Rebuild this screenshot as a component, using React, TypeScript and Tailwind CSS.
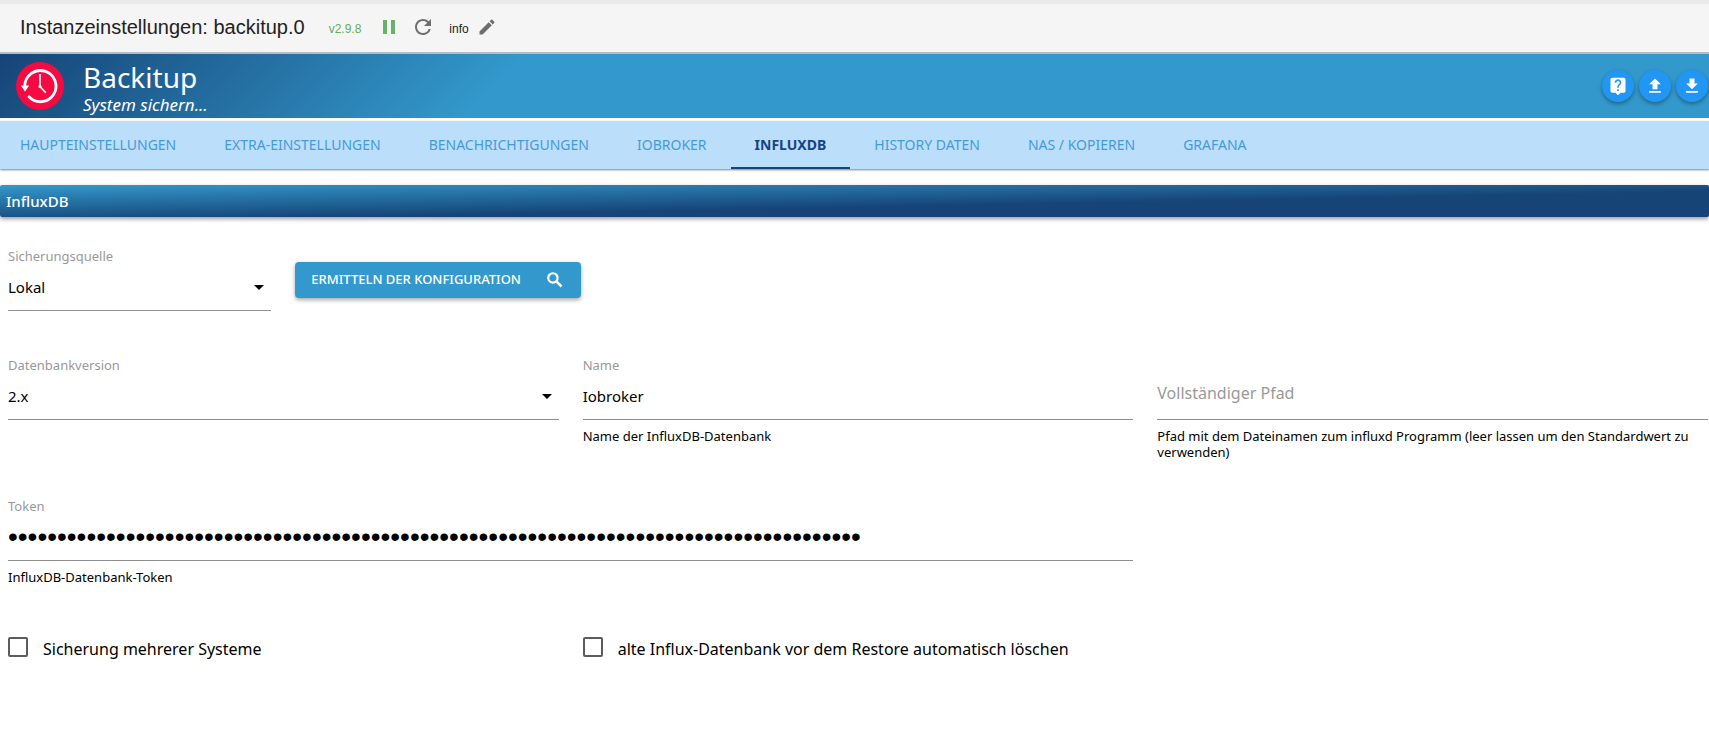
import { useState, type ReactNode } from "react";
import { MdPause, MdRefresh, MdEdit, MdLiveHelp, MdFileUpload, MdFileDownload, MdArrowDropDown } from "react-icons/md";

const tabs = [
  "Haupteinstellungen",
  "Extra-Einstellungen",
  "Benachrichtigungen",
  "ioBroker",
  "InfluxDB",
  "History Daten",
  "NAS / Kopieren",
  "Grafana",
];

function Logo() {
  return (
    <svg viewBox="0 0 48 48" className="size-12 shrink-0" aria-hidden="true">
      <circle cx="24" cy="24" r="24" fill="#f50a41" />
      <path d="M8.8 24A15.6 15.6 0 1 1 13 34.8" fill="none" stroke="#fff" strokeWidth="2.8" strokeLinecap="round" />
      <path d="M4.8 23.4h8.4l-4.2 6.2z" fill="#fff" />
      <path d="M24 12v12.6l5.8 6.2" fill="none" stroke="#fff" strokeWidth="1.6" />
      <circle cx="24" cy="24.4" r="1.5" fill="#fff" />
    </svg>
  );
}

function SearchIcon() {
  return (
    <svg viewBox="0 0 24 24" className="size-5" fill="none" stroke="currentColor" aria-hidden="true">
      <circle cx="9.5" cy="9.5" r="5.6" strokeWidth="2.6" />
      <path d="M14 14l5.8 5.8" strokeWidth="3" />
    </svg>
  );
}

function RoundButton({ label, children }: { label: string; children: ReactNode }) {
  return (
    <button
      type="button"
      aria-label={label}
      className="flex size-8 items-center justify-center rounded-full bg-[#2196f3] text-xl text-white shadow-[0_2px_4px_rgba(0,0,0,0.35)]"
    >
      {children}
    </button>
  );
}

function Field({ id, label, helper, className, children }: { id: string; label: string; helper?: string; className: string; children: ReactNode }) {
  return (
    <div className={className}>
      <label htmlFor={id} className="block text-[13px] leading-[14px] text-[#999999]">
        {label}
      </label>
      <div className="mt-2 flex h-10 items-start border-b border-[#8e8e8e]">{children}</div>
      {helper && <p className="mt-2 text-[13px] leading-4">{helper}</p>}
    </div>
  );
}

function SelectInput({ id, options }: { id: string; options: string[] }) {
  return (
    <div className="grid w-full grid-cols-[1fr_24px] items-center">
      <select id={id} className="col-span-2 col-start-1 row-start-1 h-8 w-full appearance-none bg-transparent text-[15px] outline-none">
        {options.map((o) => (
          <option key={o}>{o}</option>
        ))}
      </select>
      <MdArrowDropDown className="pointer-events-none col-start-2 row-start-1 size-6" />
    </div>
  );
}

function Check({ label, className }: { label: string; className: string }) {
  return (
    <label className={className}>
      <input type="checkbox" className="size-5 shrink-0 appearance-none rounded-xs border-2 border-[#5c5c5c] checked:bg-[#3399cc]" />
      <span className="pt-1">{label}</span>
    </label>
  );
}

export default function App() {
  const [active, setActive] = useState("InfluxDB");
  return (
    <div className="min-h-screen bg-white font-['Noto_Sans',sans-serif] text-black">
      <header className="flex h-[54px] items-center border-t-4 border-b-2 border-t-[#e9e9e9] border-b-[#b4bcc4] bg-[#f5f5f5] pb-0.5 pl-5 font-['Liberation_Sans',sans-serif] text-[#222]">
        <h1 className="text-xl">Instanzeinstellungen: backitup.0</h1>
        <span className="ml-6 pt-1 text-xs text-[#5fae63]">v2.9.8</span>
        <button type="button" aria-label="Pause" className="ml-4 text-[#66b26a]">
          <MdPause className="size-6" />
        </button>
        <button type="button" aria-label="Neu laden" className="ml-2.5 text-[#6e6e6e]">
          <MdRefresh className="size-6" />
        </button>
        <span className="ml-3.5 pt-1 text-xs">info</span>
        <button type="button" aria-label="Bearbeiten" className="ml-2 text-[#6e6e6e]">
          <MdEdit className="size-5" />
        </button>
      </header>

      <div className="flex h-16 items-center bg-[linear-gradient(135deg,#164477_0%,#3399cc_30%)] pr-px pl-4 text-white">
        <Logo />
        <div className="ml-[19px] pt-1.5">
          <h2 className="text-[28px] leading-8">Backitup</h2>
          <p className="text-[17px] leading-6 italic">System sichern...</p>
        </div>
        <div className="ml-auto flex gap-[5px]">
          <RoundButton label="Hilfe">
            <MdLiveHelp />
          </RoundButton>
          <RoundButton label="Konfiguration laden">
            <MdFileUpload />
          </RoundButton>
          <RoundButton label="Konfiguration speichern">
            <MdFileDownload />
          </RoundButton>
        </div>
      </div>

      <nav role="tablist" className="mt-[3px] flex h-12 bg-[#bbdefb] shadow-[0_1px_2px_rgba(0,0,0,0.5)]">
        {tabs.map((t) => (
          <button
            key={t}
            type="button"
            role="tab"
            aria-selected={t === active}
            onClick={() => setActive(t)}
            className={
              t === active
                ? "border-b-2 border-[#164477] px-6 pt-0.5 text-sm font-bold text-[#164485] uppercase"
                : "border-b-2 border-transparent px-6 pt-0.5 text-sm text-[#459bd8] uppercase first:pl-5"
            }
          >
            {t}
          </button>
        ))}
      </nav>

      <main>
        <h3 className="mt-4 flex h-8 items-center rounded-xs bg-[linear-gradient(to_bottom_right,#3399cc_0%,#164477_60%)] pl-1.5 text-[15px] font-medium text-white shadow-[0_2px_4px_rgba(0,0,0,0.4)]">
          InfluxDB
        </h3>

        <form className="grid grid-cols-6 gap-x-6 pt-8 pr-px pl-2">
          <Field id="source" label="Sicherungsquelle" className="col-span-1 h-[109px]">
            <SelectInput id="source" options={["Lokal", "Remote"]} />
          </Field>
          <div className="col-span-5 pt-[13px]">
            <button
              type="button"
              className="flex h-9 items-center gap-6 rounded-sm bg-[#3399cc] px-4 text-[13px] font-medium text-white uppercase shadow-[0_2px_4px_rgba(0,0,0,0.35)]"
            >
              Ermitteln der Konfiguration
              <SearchIcon />
            </button>
          </div>

          <Field id="version" label="Datenbankversion" className="col-span-2 h-[141px]">
            <SelectInput id="version" options={["2.x", "1.x"]} />
          </Field>
          <Field id="name" label="Name" helper="Name der InfluxDB-Datenbank" className="col-span-2">
            <input id="name" type="text" defaultValue="Iobroker" className="h-8 w-full bg-transparent text-[15px] outline-none" />
          </Field>
          <div className="col-span-2">
            <div className="flex h-[62px] border-b border-[#8e8e8e]">
              <input
                type="text"
                aria-label="Vollständiger Pfad"
                placeholder="Vollständiger Pfad"
                className="mt-2 w-full bg-transparent text-base outline-none placeholder:text-[#999999]"
              />
            </div>
            <p className="mt-2 text-[13px] leading-4">
              Pfad mit dem Dateinamen zum influxd Programm (leer lassen um den Standardwert zu verwenden)
            </p>
          </div>

          <Field id="token" label="Token" helper="InfluxDB-Datenbank-Token" className="col-span-4 h-[134px]">
            <input
              id="token"
              type="password"
              defaultValue={"x".repeat(87)}
              className="h-8 w-full bg-transparent font-['Liberation_Sans',sans-serif] text-[28px] outline-none"
            />
          </Field>

          <Check label="Sicherung mehrerer Systeme" className="col-span-2 col-start-1 flex items-center gap-[15px] text-base leading-6" />
          <Check label="alte Influx-Datenbank vor dem Restore automatisch löschen" className="col-span-3 flex items-center gap-[15px] text-base leading-6" />
        </form>
      </main>
    </div>
  );
}
